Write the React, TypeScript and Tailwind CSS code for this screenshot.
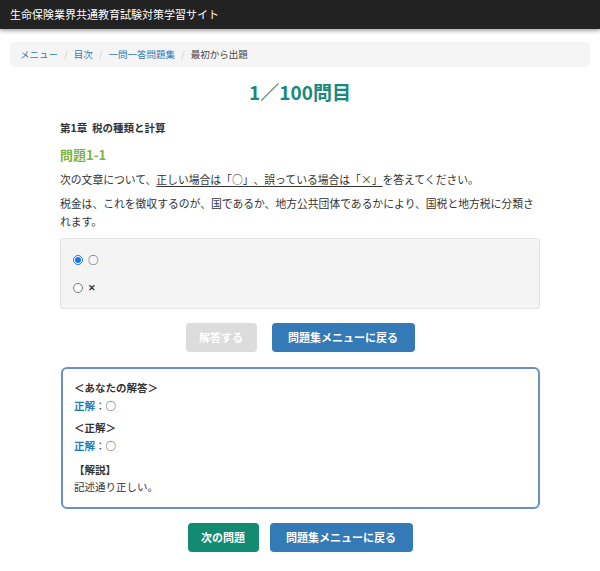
import React from 'react'

const font = { fontFamily: '"Noto Sans CJK JP", "Noto Sans", sans-serif' }

function Btn({ children, className }: { children: React.ReactNode; className: string }) {
  return (
    <button
      className={`h-[29px] rounded-[4px] text-[11px] font-bold text-white flex items-center justify-center ${className}`}
    >
      {children}
    </button>
  )
}

export default function App() {
  return (
    <div className="min-h-[571px] bg-white text-[#333] [text-spacing-trim:space-all]" style={font}>
      {/* Header */}
      <header className="h-[29px] bg-[#222] flex items-center px-[10px] shadow-[0_2px_4px_rgba(0,0,0,0.35)]">
        <span className="text-white text-[11px]">生命保険業界共通教育試験対策学習サイト</span>
      </header>

      {/* Breadcrumb */}
      <nav className="mx-[10px] mt-[13px] h-[25px] bg-[#f5f5f5] rounded-[4px] flex items-center px-[10px] text-[9.5px] gap-[6px]">
        <a className="text-[#337ab7]">メニュー</a>
        <span className="text-[#ccc]">/</span>
        <a className="text-[#337ab7]">目次</a>
        <span className="text-[#ccc]">/</span>
        <a className="text-[#337ab7]">一問一答問題集</a>
        <span className="text-[#ccc]">/</span>
        <span className="text-[#444]">最初から出題</span>
      </nav>

      <h1 className="mt-[12px] text-center text-[19px] font-bold text-[#178a7b] leading-[26px]">1／100問目</h1>

      <main className="w-[480px] mx-auto">
        <p className="mt-[15px] text-[10.5px] font-bold leading-[16px]">第1章&nbsp;&nbsp;税の種類と計算</p>
        <h2 className="mt-[10px] text-[13px] font-bold text-[#7cb342] leading-[18px]">問題1-1</h2>
        <p className="mt-[6px] text-[10.8px] leading-[18px]">
          次の文章について、<span className="underline underline-offset-2">正しい場合は「○」、誤っている場合は「×」</span>を答えてください。
        </p>
        <p className="mt-[6px] text-[10.8px] leading-[18px]">
          税金は、これを徴収するのが、国であるか、地方公共団体であるかにより、国税と地方税に分類されます。
        </p>

        <div className="mt-[8px] h-[71px] bg-[#f4f4f4] border border-[#e3e3e3] rounded-[3px] flex flex-col justify-center gap-[12px] px-[12px] text-[10.5px]">
          <label className="flex items-center gap-[5px] leading-[16px]">
            <input type="radio" name="ans" defaultChecked className="w-[10px] h-[10px] m-0 accent-[#1a73e8]" />
            <span>○</span>
          </label>
          <label className="flex items-center gap-[5px] leading-[16px]">
            <input type="radio" name="ans" className="w-[10px] h-[10px] m-0" />
            <span className="font-bold text-[9px]">✕</span>
          </label>
        </div>

        <div className="mt-[14px] flex justify-center gap-[15px]">
          <Btn className="w-[71px] bg-[#dcdcdc]">解答する</Btn>
          <Btn className="w-[143px] bg-[#337ab7]">問題集メニューに戻る</Btn>
        </div>

        <div className="mt-[15px] ml-[1px] h-[142px] border-2 border-[#6b8fc2] rounded-[6px] px-[11px] pt-[10px] text-[10.5px] leading-[18px]">
          <p className="font-bold">＜あなたの解答＞</p>
          <p>
            <span className="text-[#1f7ab8] font-bold">正解</span>：○
          </p>
          <p className="mt-[4px] font-bold">＜正解＞</p>
          <p>
            <span className="text-[#1f7ab8] font-bold">正解</span>：○
          </p>
          <p className="mt-[6px] font-bold">【解説】</p>
          <p className="leading-[16px]">記述通り正しい。</p>
        </div>

        <div className="mt-[14px] flex justify-center gap-[11px]">
          <Btn className="w-[71px] bg-[#138a72]">次の問題</Btn>
          <Btn className="w-[143px] bg-[#337ab7]">問題集メニューに戻る</Btn>
        </div>
      </main>
    </div>
  )
}
